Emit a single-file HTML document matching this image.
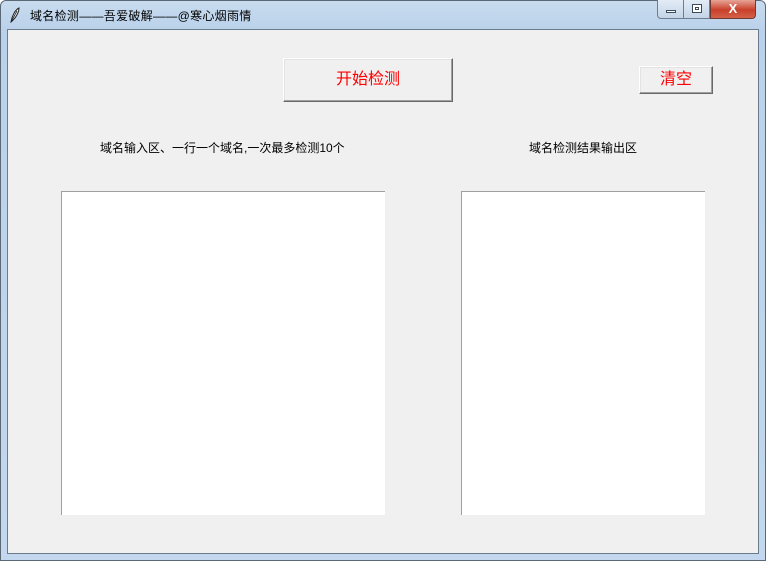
<!DOCTYPE html>
<html><head><meta charset="utf-8"><style>
*{margin:0;padding:0;box-sizing:border-box}
body{width:766px;height:561px;overflow:hidden;background:#fff;font-family:"Liberation Sans","Noto Sans CJK SC","WenQuanYi Zen Hei",sans-serif}
.win{position:absolute;left:0;top:0;width:766px;height:561px;border:1px solid #5a6878;border-radius:6px 6px 0 0;background:linear-gradient(180deg,#c9dcef 0,#b9d1ea 30px,#c3d8ee 100%)}
.client{position:absolute;left:7px;top:29px;width:752px;height:525px;background:#f0f0f0;border:1px solid #6b7c8e}
.title{position:absolute;left:30px;top:7px;font-size:12px;color:#000;letter-spacing:0.3px}
.abs{position:absolute}
.btn{position:absolute;background:#f0f0f0;border:1px solid;border-color:#fff #696969 #696969 #fff;box-shadow:inset -1px -1px 0 #a0a0a0,inset 1px 1px 0 #e3e3e3;color:#f00;text-align:center}
.lbl{position:absolute;font-size:12px;color:#000}
.box{position:absolute;background:#fff;border-left:1px solid #a0a0a0;border-top:1px solid #a0a0a0}
</style></head><body>
<div class="win"></div>
<svg class="abs" style="left:9px;top:7px" width="12" height="16" viewBox="0 0 12 16"><path d="M2 15 C3 9 6 3 10 1 C10 5 7 11 2 15 Z" fill="#fff" stroke="#222" stroke-width="1"/><path d="M2 15 L8 4" stroke="#222" stroke-width="0.8"/></svg>
<div class="title">域名检测——吾爱破解——@寒心烟雨情</div>
<div class="abs" style="left:657px;top:0;width:27px;height:19px;border:1px solid #6d7e93;border-top:none;border-radius:0 0 0 4px;background:linear-gradient(#e3ecf6,#c3d4e7)"><div class="abs" style="left:8px;top:10px;width:10px;height:3px;background:#fff;border:1px solid #3c4a5c"></div></div>
<div class="abs" style="left:684px;top:0;width:26px;height:19px;border:1px solid #6d7e93;border-left:none;border-top:none;background:linear-gradient(#e3ecf6,#c3d4e7)"><div class="abs" style="left:8px;top:4px;width:10px;height:9px;border:1px solid #3c4a5c;background:#fff"><div class="abs" style="left:2px;top:2px;width:4px;height:3px;border:1px solid #3c4a5c"></div></div></div>
<div class="abs" style="left:710px;top:0;width:46px;height:19px;border:1px solid #6d3b34;border-top:none;border-radius:0 0 4px 0;background:linear-gradient(#e7a597,#c9402a 55%,#d5614a);color:#fff;font-weight:bold;font-size:13px;text-align:center;line-height:17px">X</div>
<div class="client"></div>
<div class="btn" style="left:283px;top:58px;width:170px;height:44px;font-size:16px;line-height:42px">开始检测</div>
<div class="btn" style="left:639px;top:66px;width:74px;height:28px;font-size:16px;line-height:26px">清空</div>
<div class="lbl" style="left:100px;top:139px">域名输入区、一行一个域名,一次最多检测10个</div>
<div class="lbl" style="left:529px;top:139px">域名检测结果输出区</div>
<div class="box" style="left:61px;top:191px;width:324px;height:324px"></div>
<div class="box" style="left:461px;top:191px;width:244px;height:324px"></div>
</body></html>
